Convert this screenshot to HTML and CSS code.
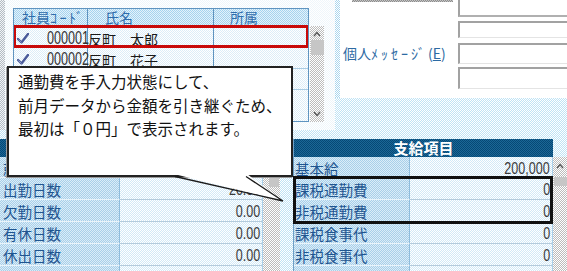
FILE: index.html
```html
<!DOCTYPE html>
<html lang="ja">
<head>
<meta charset="utf-8">
<title>支給項目</title>
<link rel="stylesheet" href="styles.css">
</head>
<body>
<div class="screen">
  <div class="top">
    <div class="edge"></div>
    <div class="grid-panel">
      <div class="grid">
        <div class="g-head">
          <div class="gc c1 h1">社員<span class="hw">ｺｰﾄﾞ</span></div>
          <div class="gc c2 h2">氏名</div>
          <div class="gc c3 h3">所属</div>
        </div>
        <div class="g-row sel">
          <div class="gc c1"><svg class="chk" viewBox="0 0 12 11" width="12" height="11"><path d="M1 6 L4.5 9.5 L11 1" fill="none" stroke="#4a5a9a" stroke-width="2.4" stroke-linecap="round" stroke-linejoin="round"/><path d="M1.5 6.5 L4.5 9.5" fill="none" stroke="#8a98c8" stroke-width="1"/></svg><span class="num">000001</span></div>
          <div class="gc c2">反町　太郎</div>
          <div class="gc c3"></div>
        </div>
        <div class="g-row">
          <div class="gc c1"><svg class="chk" viewBox="0 0 12 11" width="12" height="11"><path d="M1 6 L4.5 9.5 L11 1" fill="none" stroke="#4a5a9a" stroke-width="2.4" stroke-linecap="round" stroke-linejoin="round"/><path d="M1.5 6.5 L4.5 9.5" fill="none" stroke="#8a98c8" stroke-width="1"/></svg><span class="num">000002</span></div>
          <div class="gc c2">反町　花子</div>
          <div class="gc c3"></div>
        </div>
        <div class="g-row"><div class="gc c1"></div><div class="gc c2"></div><div class="gc c3"></div></div>
        <div class="g-row"><div class="gc c1"></div><div class="gc c2"></div><div class="gc c3"></div></div>
      </div>
      <div class="vscroll">
        <svg class="arr" viewBox="0 0 8 6" width="8" height="6"><path d="M1 5 L4 1.5 L7 5" fill="none" stroke="#555" stroke-width="1.3"/></svg>
        <div class="thumb"></div>
        <div class="spacer"></div>
        <svg class="arr" viewBox="0 0 8 6" width="8" height="6"><path d="M1 1 L4 4.5 L7 1" fill="none" stroke="#555" stroke-width="1.3"/></svg>
      </div>
    </div>
    <div class="sep"></div>
    <div class="msg-panel">
      <div class="msg-left">
        <div class="topline"></div>
        <div class="msg-label">個人<span class="hw">ﾒｯｾｰｼﾞ</span>(<u>E</u>)</div>
      </div>
      <div class="boxes">
        <div class="box b1"></div>
        <div class="box b2"></div>
        <div class="box b3"></div>
        <div class="box b4"></div>
      </div>
    </div>
  </div>

  <div class="bottom">
    <div class="tbl tl">
      <div class="t-main">
        <div class="t-head">勤怠項目</div>
        <div class="t-row r1"><div class="lbl">就業日数</div><div class="val"><span class="n">20.00</span></div></div>
        <div class="t-row"><div class="lbl">出勤日数</div><div class="val"><span class="n">20.00</span></div></div>
        <div class="t-row"><div class="lbl">欠勤日数</div><div class="val"><span class="n">0.00</span></div></div>
        <div class="t-row"><div class="lbl">有休日数</div><div class="val"><span class="n">0.00</span></div></div>
        <div class="t-row"><div class="lbl">休出日数</div><div class="val"><span class="n">0.00</span></div></div>
        <div class="t-row"><div class="lbl"></div><div class="val"></div></div>
      </div>
      <div class="t-scroll">
        <div class="t-thumb"></div>
      </div>
    </div>
    <div class="tbl tr">
      <div class="t-main">
        <div class="t-head">支給項目</div>
        <div class="t-row r1"><div class="lbl">基本給</div><div class="val"><span class="n">200,000</span></div></div>
        <div class="t-row"><div class="lbl">課税通勤費</div><div class="val"><span class="n">0</span></div></div>
        <div class="t-row"><div class="lbl">非税通勤費</div><div class="val"><span class="n">0</span></div></div>
        <div class="t-row"><div class="lbl">課税食事代</div><div class="val"><span class="n">0</span></div></div>
        <div class="t-row"><div class="lbl">非税食事代</div><div class="val"><span class="n">0</span></div></div>
        <div class="t-row"><div class="lbl"></div><div class="val"></div></div>
      </div>
      <div class="t-scroll">
        <svg class="arr" viewBox="0 0 8 6" width="8" height="6"><path d="M1 5 L4 1.5 L7 5" fill="none" stroke="#555" stroke-width="1.3"/></svg>
        <div class="t-thumb"></div>
      </div>
    </div>
  </div>

  <div class="focus-box"></div>
  <div class="callout">通勤費を手入力状態にして、<br>前月データから金額を引き継ぐため、<br>最初は「０円」で表示されます。</div>
  <svg class="tail" viewBox="0 0 120 40" width="120" height="40">
    <polygon points="4,4 77,4 113,31" fill="#fff"/>
    <path d="M5 6.5 L113 31 M76 6.5 L113 31" fill="none" stroke="#1a1a1a" stroke-width="1.3"/>
  </svg>
</div>
</body>
</html>
```

FILE: styles.css
```css
* { box-sizing: border-box; }
html, body { margin: 0; padding: 0; }
body {
  width: 567px;
  height: 271px;
  overflow: hidden;
  font-family: "Noto Sans CJK JP", "Noto Sans", sans-serif;
  font-size: 14px;
  color: #1a1a1a;
}
.screen {
  position: relative;
  width: 567px;
  height: 271px;
  overflow: hidden;
  background: repeating-conic-gradient(#bfe3f5 0 25%, #ffffff 0 50%) 0 0 / 2px 2px;
}
.hw { letter-spacing: 2.5px; }

/* ---------- top ---------- */
.top { display: flex; align-items: flex-start; height: 130px; }
.edge {
  width: 5px; height: 130px;
  background: repeating-conic-gradient(#b4bcc4 0 25%, #f2f4f6 0 50%) 0 0 / 2px 2px;
}
.grid-panel {
  width: 330px; height: 130px;
  display: flex; align-items: flex-start;
  padding: 8px 0 0 8px;
  background: repeating-conic-gradient(#eef6fb 0 25%, #ffffff 0 50%) 0 0 / 2px 2px;
}
.grid {
  width: 296px; height: 114px;
  border: 1px solid #5f94c0;
  overflow: hidden;
  background: repeating-conic-gradient(#dcedf8 0 25%, #ffffff 0 50%) 0 0 / 2px 2px;
}
.g-head {
  display: flex; height: 17px;
  background: repeating-conic-gradient(#a6d3ee 0 25%, #e4f2fb 0 50%) 0 0 / 2px 2px;
  color: #2f6cab;
  line-height: 17px;
}
.g-row {
  display: flex; height: 21px;
  border-top: 1px solid #a9cce4;
  line-height: 21px;
  position: relative;
}
.g-row.sel { outline: 3px solid #c80a0a; outline-offset: -2px; z-index: 1; }
.gc { height: 100%; white-space: nowrap; }
.c1 { width: 74px; border-right: 1px solid #5f94c0; display: flex; align-items: center; padding: 2px 4px 0 3px; }
.c2 { width: 126px; border-right: 1px solid #5f94c0; padding-top: 2px; }
.c3 { flex: 1; }
.g-head .gc { padding-top: 0; }
.h1 { padding-left: 8px; }
.h2 { padding-left: 17px; }
.h3 { padding-left: 16px; }
.chk { flex: none; }
.num {
  margin-left: auto;
  display: inline-block;
  font-family: "Liberation Sans", Arial, sans-serif;
  font-size: 18px;
  line-height: 18px;
  color: #333;
  transform: scaleX(0.7);
  transform-origin: 100% 50%;
}
.vscroll {
  width: 14px; height: 96px;
  margin: 18px 0 0 1px;
  display: flex; flex-direction: column; align-items: center;
  padding: 5px 0 5px;
  background: repeating-conic-gradient(#bcbcbc 0 25%, #ffffff 0 50%) 0 0 / 2px 2px;
}
.vscroll .thumb { width: 13px; height: 15px; margin-top: 3px; background: #c6c6c6; }
.vscroll .spacer { flex: 1; }
.sep {
  width: 5px; height: 98px;
  background: repeating-conic-gradient(#a9d6ee 0 25%, #ffffff 0 50%) 0 0 / 2px 2px;
}
.msg-panel { flex: 1; height: 98px; background: #fff; display: flex; }
.msg-left { width: 118px; }
.topline {
  margin-left: 12px; width: 101px; height: 2px;
  background: repeating-conic-gradient(#8c8c8c 0 25%, #c4c4c4 0 50%) 0 0 / 2px 2px;
}
.msg-label {
  margin-top: 43px; padding-left: 3px;
  color: #2d6aa3; font-size: 14px; line-height: 16px; white-space: nowrap;
}
.msg-label .hw { letter-spacing: 3px; }
.msg-label u { text-underline-offset: 1px; }
.boxes { flex: 1; }
.box {
  border-top: 2px solid #a2a2a2;
  border-left: 2px solid #a2a2a2;
  border-bottom: 1px solid #e4e4e4;
}
.b1 { height: 17px; border-top: none; border-bottom: 2px solid #b0b0b0; }
.b2 { height: 17px; margin-top: 4px; }
.b3 { height: 21px; margin-top: 5px; }
.b4 { height: 22px; margin-top: 3px; }

/* ---------- bottom tables ---------- */
.bottom { display: flex; padding-top: 9px; }
.tbl { display: flex; align-items: flex-start; }
.tl .t-main { width: 263px; }
.tl .t-scroll { width: 17px; }
.tr { margin-left: 13px; }
.tr .t-main { width: 260px; border-left: 1px solid #6e9fc6; }
.tr .t-scroll { width: 14px; }
.t-head {
  height: 18px;
  text-align: center;
  color: #fff; font-weight: 700; font-size: 15px; line-height: 18px;
  background: repeating-conic-gradient(#064876 0 25%, #1b6796 0 50%) 0 0 / 2px 2px;
}
.t-row { display: flex; height: 22px; }
.t-row.r1 { height: 21px; }
.lbl {
  width: 120px;
  padding: 2px 0 0 3px;
  line-height: 19px;
  font-size: 14.5px;
  color: #1f5590;
  white-space: nowrap;
  border-right: 1px solid #8fbcdc;
  border-bottom: 1px solid #e9f4fb;
  background: repeating-conic-gradient(#a8cfe9 0 25%, #dbedf8 0 50%) 0 0 / 2px 2px;
}
.tr .lbl { width: 116px; padding-left: 1px; }
.val {
  flex: 1;
  text-align: right;
  padding: 2px 2px 0 0;
  line-height: 19px;
  border-bottom: 1px solid #b4cbdc;
  border-right: 1px solid #a9d0ea;
  background: repeating-conic-gradient(#d2e9f7 0 25%, #ffffff 0 50%) 0 0 / 2px 2px;
}
.n {
  display: inline-block;
  font-family: "Liberation Sans", Arial, sans-serif;
  font-size: 16.5px;
  color: #3a3a3a;
  transform: scaleX(0.76);
  transform-origin: 100% 50%;
}
.t-scroll {
  margin-top: 18px;
  height: 120px;
  display: flex; flex-direction: column; align-items: center;
  background: repeating-conic-gradient(#bcbcbc 0 25%, #ffffff 0 50%) 0 0 / 2px 2px;
}
.tl .t-thumb { width: 10px; height: 9px; margin: 21px 0 0 4px; background: #c6c6c6; }
.tr .arr { margin-top: 6px; }
.tr .t-thumb { width: 13px; height: 9px; margin-top: 8px; background: #c6c6c6; }

/* ---------- overlays ---------- */
.focus-box {
  position: absolute;
  left: 293px; top: 176px;
  width: 260px; height: 48px;
  border: 3px solid #101010;
}
.callout {
  position: absolute;
  left: 7px; top: 66px;
  width: 286px; height: 111px;
  background: #fff;
  border: 2px solid #222;
  box-shadow: -1px 1px 0 #9a9a9a;
  padding: 2px 0 0 9px;
  font-size: 15.5px;
  line-height: 23.5px;
  color: #111;
  white-space: nowrap;
}
.tail { position: absolute; left: 170px; top: 170px; }
```
